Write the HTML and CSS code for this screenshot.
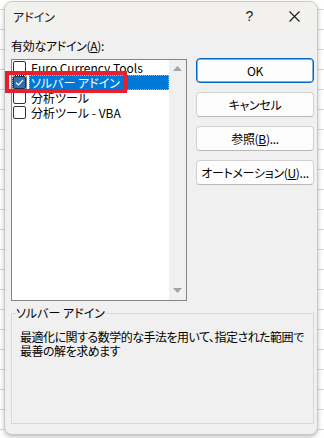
FILE: index.html
```html
<!DOCTYPE html>
<html lang="ja">
<head>
<meta charset="utf-8">
<title>アドイン</title>
<link rel="stylesheet" href="styles.css">
</head>
<body>
<div class="dialog">
  <div class="titlebar">
    <span class="title">アドイン</span>
    <span class="help">?</span>
    <span class="close"><svg width="11" height="11" viewBox="0 0 11 11"><path d="M0.5 0.5 L10.5 10.5 M10.5 0.5 L0.5 10.5" stroke="#1a1a1a" stroke-width="1.1" fill="none"/></svg></span>
  </div>
  <div class="content">
    <div class="main">
      <div class="left">
        <div class="label">有効なアドイン(<u>A</u>):</div>
        <div class="listbox">
          <div class="items">
            <div class="row"><span class="cb"></span><span class="text">Euro Currency Tools</span></div>
            <div class="row"><span class="cb checked focus"><svg width="11" height="11" viewBox="0 0 11 11"><path d="M2 5.8 L4.4 8 L9 3" stroke="#fff" stroke-width="1.2" fill="none"/></svg></span><span class="text selected">ソルバー アドイン</span></div>
            <div class="row"><span class="cb"></span><span class="text">分析ツール</span></div>
            <div class="row"><span class="cb"></span><span class="text">分析ツール - VBA</span></div>
          </div>
          <div class="scrollbar">
            <svg width="9" height="5" viewBox="0 0 9 5"><path d="M0 5 L4.5 0 L9 5 Z" fill="#a3a3a3"/></svg>
            <svg width="9" height="5" viewBox="0 0 9 5"><path d="M0 0 L4.5 5 L9 0 Z" fill="#a3a3a3"/></svg>
          </div>
          <div class="highlight"></div>
        </div>
      </div>
      <div class="buttons">
        <button class="btn primary">OK</button>
        <button class="btn">キャンセル</button>
        <button class="btn">参照(<u>B</u>)...</button>
        <button class="btn">オートメーション(<u>U</u>)...</button>
      </div>
    </div>
    <div class="group">
      <span class="legend">ソルバー アドイン</span>
      <p class="desc">最適化に関する数学的な手法を用いて、指定された範囲で<br>最善の解を求めます</p>
    </div>
  </div>
</div>
</body>
</html>
```

FILE: styles.css
```css
* { box-sizing: border-box; }
html, body { margin: 0; padding: 0; }
body {
  width: 324px;
  height: 438px;
  overflow: hidden;
  background-color: #ffffff;
  background-image:
    repeating-linear-gradient(to bottom, transparent 0, transparent 9px, #d6d6d6 9px, #d6d6d6 10px, transparent 10px, transparent 20px);
  font-family: "Noto Sans CJK JP", "Noto Sans", sans-serif;
  font-feature-settings: "palt";
  font-size: 12px;
  color: #000;
  padding-top: 1px;
}
.dialog {
  margin-left: 4px;
  width: 314px;
  height: 434px;
  background: #f0f0f0;
  border: 1px solid #c9c9c9;
  border-radius: 8px;
  box-shadow: 0 2px 4px rgba(0,0,0,0.25);
  overflow: hidden;
  position: relative;
}
.titlebar {
  height: 28px;
  background: #f3f1ee;
  display: flex;
  align-items: center;
  padding-left: 8px;
}
.title { font-size: 12px; color: #1a1a1a; flex: 1; }
.help { font-family: "Liberation Sans", sans-serif; font-size: 14px; width: 45px; text-align: center; color: #1a1a1a; }
.close { width: 45px; display: flex; justify-content: center; align-items: center; }
.content { padding: 0 3px 0 6px; }
.main { display: flex; gap: 9px; }
.left { width: 176px; }
.label { margin-top: 9px; line-height: 14px; height: 14px; margin-bottom: 6px; color: #000; letter-spacing: -0.3px; }
.listbox {
  height: 242px;
  border: 1px solid #858585;
  background: #fff;
  display: flex;
  position: relative;
}
.items { flex: 1; }
.row { height: 15px; display: flex; align-items: center; }
.cb {
  width: 13px; height: 13px;
  margin-left: 1px;
  border: 1px solid #333;
  border-radius: 2px;
  background: #fff;
  flex: none;
  display: flex; align-items: center; justify-content: center;
}
.cb.checked { background: #2f6fb6; border-color: #1f2f45; }
.cb.focus { outline: 1px dotted #000; outline-offset: 0; }
.text { margin-left: 3px; padding-left: 2px; line-height: 15px; height: 15px; white-space: nowrap; }
.text.selected {
  flex: 1;
  background: #0078d7;
  color: #fff;
  outline: 1px dotted #f2a742;
  outline-offset: -1px;
}
.scrollbar {
  width: 17px;
  background: #f0f0f0;
  display: flex;
  flex-direction: column;
  justify-content: space-between;
  align-items: center;
  padding: 6px 0 7px;
}
.highlight {
  position: absolute;
  left: -7px;
  top: 11px;
  width: 122px;
  height: 22px;
  border: 4px solid #e8202e;
}
.buttons {
  flex: 1;
  padding-top: 28px;
  display: flex;
  flex-direction: column;
  gap: 9px;
}
.btn {
  height: 25px;
  font-family: inherit;
  font-feature-settings: "palt";
  font-size: 12px;
  letter-spacing: -0.3px;
  color: #000;
  background: #fdfdfd;
  border: 1px solid #d0d0d0;
  border-bottom-color: #b8b8b8;
  border-radius: 4px;
  padding: 0;
  white-space: nowrap;
}
.btn.primary { border: 1px solid #0067c0; box-shadow: inset 0 0 0 0.5px #0067c0; }
.group {
  margin-top: 12px;
  height: 111px;
  border: 1px solid #d9d9d9;
  position: relative;
  padding: 16px 4px 0 8px;
}
.legend {
  position: absolute;
  left: 4px;
  top: -8px;
  line-height: 14px;
  background: #f0f0f0;
  padding: 0 1px 0 0;
}
.desc { margin: 0; line-height: 14px; white-space: nowrap; letter-spacing: -0.5px; }
u { text-decoration-thickness: 1px; text-underline-offset: 1px; }
```
